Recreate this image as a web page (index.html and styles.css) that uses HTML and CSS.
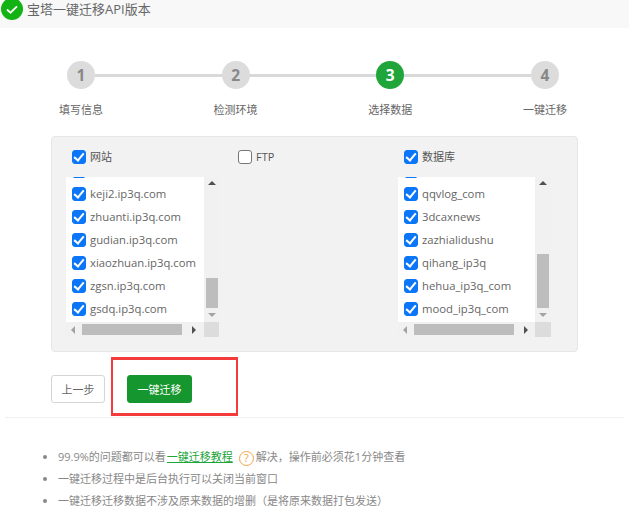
FILE: index.html
```html
<!DOCTYPE html>
<html lang="zh-CN">
<head>
<meta charset="utf-8">
<title>宝塔一键迁移API版本</title>
<link rel="stylesheet" href="styles.css">
</head>
<body>
<header class="title-bar">
  <span class="ok-badge"><svg viewBox="0 0 22 22" width="22" height="22"><circle cx="11" cy="11" r="11" fill="#12b312"/><path d="M6 11.5l3.5 3.2L16 8.3" fill="none" stroke="#fff" stroke-width="1.8"/></svg></span>
  <span class="title-text">宝塔一键迁移API版本</span>
</header>
<ol class="steps">
  <li class="step"><span class="step-dot">1</span><span class="step-label">填写信息</span></li>
  <li class="step"><span class="step-dot">2</span><span class="step-label">检测环境</span></li>
  <li class="step step-active"><span class="step-dot">3</span><span class="step-label">选择数据</span></li>
  <li class="step"><span class="step-dot">4</span><span class="step-label">一键迁移</span></li>
</ol>
<section class="panel">
  <div class="col">
    <label class="head"><input class="cb" type="checkbox" checked>网站</label>
    <div class="scroll-box">
      <div class="rows">
        <label class="row"><input class="cb" type="checkbox" checked></label>
        <label class="row"><input class="cb" type="checkbox" checked>keji2.ip3q.com</label>
        <label class="row"><input class="cb" type="checkbox" checked>zhuanti.ip3q.com</label>
        <label class="row"><input class="cb" type="checkbox" checked>gudian.ip3q.com</label>
        <label class="row"><input class="cb" type="checkbox" checked>xiaozhuan.ip3q.com</label>
        <label class="row"><input class="cb" type="checkbox" checked>zgsn.ip3q.com</label>
        <label class="row"><input class="cb" type="checkbox" checked>gsdq.ip3q.com</label>
      </div>
      <div class="vbar"><i class="arrow up"></i><b class="vthumb" style="height:30px"></b><i class="arrow down"></i></div>
      <div class="hbar"><i class="arrow left"></i><b class="hthumb"></b><i class="arrow right"></i></div>
      <div class="corner"></div>
    </div>
  </div>
  <div class="col">
    <label class="head"><input class="cb" type="checkbox">FTP</label>
  </div>
  <div class="col">
    <label class="head"><input class="cb" type="checkbox" checked>数据库</label>
    <div class="scroll-box scroll-box-wide">
      <div class="rows">
        <label class="row"><input class="cb" type="checkbox" checked></label>
        <label class="row"><input class="cb" type="checkbox" checked>qqvlog_com</label>
        <label class="row"><input class="cb" type="checkbox" checked>3dcaxnews</label>
        <label class="row"><input class="cb" type="checkbox" checked>zazhialidushu</label>
        <label class="row"><input class="cb" type="checkbox" checked>qihang_ip3q</label>
        <label class="row"><input class="cb" type="checkbox" checked>hehua_ip3q_com</label>
        <label class="row"><input class="cb" type="checkbox" checked>mood_ip3q_com</label>
      </div>
      <div class="vbar"><i class="arrow up"></i><b class="vthumb" style="height:54px"></b><i class="arrow down"></i></div>
      <div class="hbar"><i class="arrow left"></i><b class="hthumb"></b><i class="arrow right"></i></div>
      <div class="corner"></div>
    </div>
  </div>
</section>
<div class="actions">
  <button class="btn btn-plain" type="button">上一步</button>
  <button class="btn btn-green" type="button">一键迁移</button>
  <div class="callout"></div>
</div>
<ul class="notes">
  <li>99.9%的问题都可以看<a class="link" href="#">一键迁移教程</a><span class="help">?</span>解决，操作前必须花1分钟查看</li>
  <li>一键迁移过程中是后台执行可以关闭当前窗口</li>
  <li>一键迁移迁移数据不涉及原来数据的增删（是将原来数据打包发送）</li>
</ul>
</body>
</html>
```

FILE: styles.css
```css
* { box-sizing: border-box; }
html, body { margin: 0; padding: 0; }
body {
  width: 629px;
  height: 532px;
  overflow: hidden;
  background: #fff;
  color: #666;
  font-family: "Open Sans", "Noto Sans CJK SC", sans-serif;
  font-size: 11px;
}

.title-bar {
  display: flex;
  align-items: flex-start;
  height: 28px;
  padding-left: 1px;
  background: #f8f8f8;
  overflow: hidden;
}
.ok-badge { display: block; width: 22px; height: 22px; margin-top: -2px; }
.title-text { margin-left: 4px; font-size: 13px; line-height: 18px; color: #666; }

.steps {
  display: grid;
  grid-template-columns: repeat(4, 154.67px);
  margin: 33px 0 0 3.6px;
  padding: 0;
  list-style: none;
}
.step {
  position: relative;
  display: flex;
  flex-direction: column;
  align-items: center;
}
.step:not(:last-child)::after {
  content: "";
  position: absolute;
  left: 91px;
  top: 13px;
  width: 127px;
  height: 3px;
  background: #d9d9d9;
}
.step-dot {
  display: flex;
  align-items: center;
  justify-content: center;
  width: 28px;
  height: 28px;
  border-radius: 50%;
  background: #dcdcdc;
  color: #888;
  font-size: 15.5px;
  font-weight: 700;
}
.step-active .step-dot { background: #20a53a; color: #fff; }
.step-label { margin-top: 10px; line-height: 22px; color: #666; }

.panel {
  display: grid;
  grid-template-columns: repeat(3, 166px);
  width: 527px;
  height: 216px;
  margin: 15px 0 0 51px;
  padding: 13px 14px;
  background: #f2f2f2;
  border: 1px solid #e6e6e6;
  border-radius: 4px;
}
.head {
  display: flex;
  align-items: center;
  gap: 4.5px;
  height: 14px;
  margin: 0 0 13px 5.5px;
  padding-bottom: 2px;
  color: #555;
}
.head .cb { align-self: flex-start; }
.cb {
  appearance: none;
  display: grid;
  place-items: center;
  flex: none;
  width: 14px;
  height: 14px;
  margin: 0;
  border: 1px solid #777;
  border-radius: 3px;
  background: #fff;
}
.cb:checked { background: #0b76f7; border-color: #0b76f7; }
.cb:checked::after {
  content: "";
  width: 4px;
  height: 8px;
  margin-top: -2px;
  border: solid #fff;
  border-width: 0 2px 2px 0;
  transform: rotate(40deg);
}

.scroll-box {
  display: grid;
  grid-template-columns: 138px 15px;
  grid-template-rows: 145px 15px;
  width: 153px;
}
.scroll-box-wide { grid-template-columns: 137px 16px; }
.rows {
  display: flex;
  flex-direction: column;
  justify-content: flex-end;
  background: #fff;
  overflow: hidden;
  padding-bottom: 2px;
}
.row {
  display: flex;
  flex: none;
  align-items: center;
  gap: 4.5px;
  height: 23px;
  padding-left: 5.5px;
  color: #666;
  font-size: 11.3px;
  white-space: nowrap;
}
.vbar {
  display: flex;
  flex-direction: column;
  align-items: center;
  background: #f1f1f1;
}
.vthumb { display: block; width: 12px; margin-top: auto; background: #bdbdbd; }
.hbar {
  display: flex;
  align-items: center;
  background: #f1f1f1;
}
.hthumb { display: block; width: 100px; height: 11px; background: #bdbdbd; margin-left: 7px; }
.corner { background: #dcdcdc; }
.arrow { display: block; flex: none; width: 0; height: 0; border: 4px solid transparent; }
.arrow.up { margin-top: 4px; border-top-width: 0; border-bottom-color: #505050; }
.arrow.down { margin: 5px 0 5px; border-bottom-width: 0; border-top-color: #a3a3a3; }
.arrow.left { margin-left: 5px; border-left-width: 0; border-right-color: #a3a3a3; }
.arrow.right { margin-left: 10px; border-right-width: 0; border-left-color: #505050; }

.actions {
  position: relative;
  display: flex;
  gap: 22px;
  height: 43px;
  margin: 23px 5px 0;
  padding: 0 0 14px 46px;
  border-bottom: 1px solid #f0f0f0;
}
.btn {
  height: 28px;
  padding: 0;
  border-radius: 3px;
  font: inherit;
}
.btn-plain { width: 54px; background: #fff; border: 1px solid #d5d5d5; color: #666; }
.btn-green { width: 65px; background: #16962e; border: 1px solid #16962e; color: #fff; }
.callout {
  position: absolute;
  left: 106px;
  top: -18px;
  width: 127px;
  height: 59px;
  border: 3px solid #f43c3c;
  border-width: 3px 2px;
}

.notes {
  margin: 28px 0 0;
  padding: 0 0 0 58px;
  color: #888;
  line-height: 22px;
}
.link { margin-left: 1px; color: #20a53a; text-decoration: underline; }
.help {
  display: inline-block;
  width: 15px;
  height: 15px;
  margin: 0 2px 0 6px;
  border: 1.5px solid #f0a548;
  border-radius: 50%;
  color: #f0a548;
  font-size: 11px;
  line-height: 12px;
  text-align: center;
  vertical-align: middle;
}
```
